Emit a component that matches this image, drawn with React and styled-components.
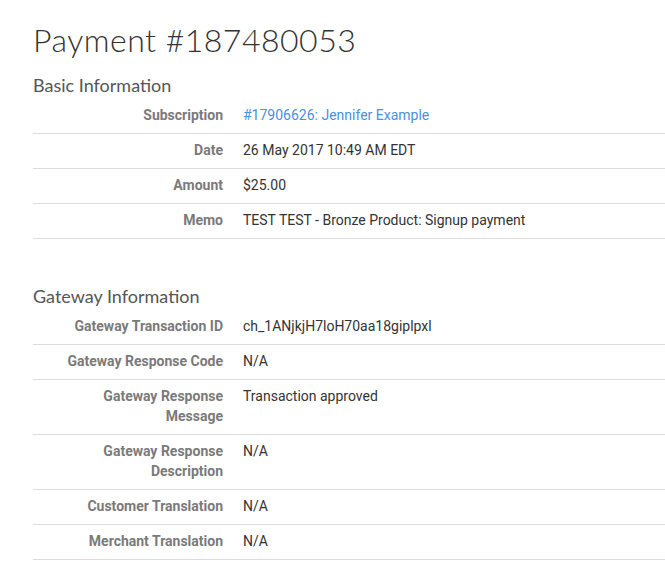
import React from 'react';
import styled, { createGlobalStyle } from 'styled-components';

const GlobalStyle = createGlobalStyle`
  body {
    margin: 0;
    background: #fff;
    font-family: Roboto, "Liberation Sans", sans-serif;
  }
`;

const Page = styled.div`
  padding: 20px 0 28px 33px;
  width: 632px;
`;

const Title = styled.h1`
  margin: 0 0 15px;
  font-family: Lato, "Open Sans", sans-serif;
  font-weight: 300;
  font-size: 32px;
  line-height: 40px;
  letter-spacing: 0.5px;
  color: #333;
`;

const Section = styled.section`
  margin-bottom: ${p => p.$gap || 0}px;
`;

const SectionTitle = styled.h2`
  margin: 0;
  padding-bottom: 4px;
  font-family: Lato, "Open Sans", sans-serif;
  font-weight: 400;
  font-size: 18px;
  line-height: 20px;
  color: #555;
`;

const Table = styled.table`
  width: 100%;
  border-collapse: collapse;
  table-layout: fixed;
  font-size: 14px;
  line-height: 20px;
`;

const Row = styled.tr`
  border-bottom: 1px solid #ddd;
`;

const Label = styled.th`
  width: 180px;
  padding: 6px 10px 8px;
  text-align: right;
  vertical-align: top;
  font-weight: 700;
  color: #7a7a7a;
`;

const Value = styled.td`
  padding: 6px 10px 8px;
  vertical-align: top;
  color: #333;
`;

const Link = styled.a`
  color: #4a90e2;
  text-decoration: none;
`;

const basic = [
  ['Subscription', <Link href="#">#17906626: Jennifer Example</Link>],
  ['Date', '26 May 2017 10:49 AM EDT'],
  ['Amount', '$25.00'],
  ['Memo', 'TEST TEST - Bronze Product: Signup payment'],
];

const gateway = [
  ['Gateway Transaction ID', 'ch_1ANjkjH7loH70aa18giplpxl'],
  ['Gateway Response Code', 'N/A'],
  ['Gateway Response Message', 'Transaction approved'],
  ['Gateway Response Description', 'N/A'],
  ['Customer Translation', 'N/A'],
  ['Merchant Translation', 'N/A'],
];

const InfoTable = ({ rows }) => (
  <Table>
    <tbody>
      {rows.map(([label, value]) => (
        <Row key={label}>
          <Label>{label}</Label>
          <Value>{value}</Value>
        </Row>
      ))}
    </tbody>
  </Table>
);

export default function App() {
  return (
    <Page>
      <GlobalStyle />
      <Title>Payment #187480053</Title>
      <Section $gap={47}>
        <SectionTitle>Basic Information</SectionTitle>
        <InfoTable rows={basic} />
      </Section>
      <Section>
        <SectionTitle>Gateway Information</SectionTitle>
        <InfoTable rows={gateway} />
      </Section>
    </Page>
  );
}
